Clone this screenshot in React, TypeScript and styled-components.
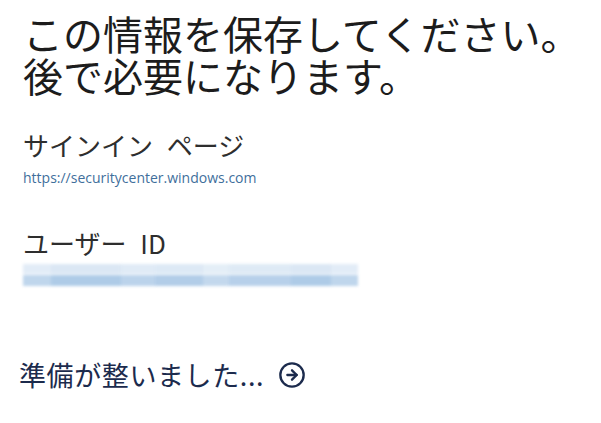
import React from 'react'
import styled, { createGlobalStyle } from 'styled-components'
import { CircleArrowRight } from 'lucide-react'

const idSegments = [
  { width: 28, tone: 0.75 },
  { width: 70, tone: 0.95 },
  { width: 34, tone: 0.8 },
  { width: 48, tone: 0.9 },
  { width: 26, tone: 0.7 },
  { width: 62, tone: 0.85 },
  { width: 40, tone: 0.95 },
  { width: 27, tone: 0.75 },
]

export default function App() {
  return (
    <>
      <GlobalStyle />
      <Page>
        <Title>
          この情報を保存してください。
          <br />
          後で必要になります。
        </Title>
        <Field $gap={32}>
          <Label>サインイン ページ</Label>
          <Url>https://securitycenter.windows.com</Url>
        </Field>
        <Field $gap={38}>
          <Label>ユーザー ID</Label>
          <Blurred>
            <BlurRow $faint>
              {idSegments.map((s, i) => (
                <Segment key={i} $tone={s.tone * 0.45} style={{ width: s.width }} />
              ))}
            </BlurRow>
            <BlurRow>
              {idSegments.map((s, i) => (
                <Segment key={i} $tone={s.tone} style={{ width: s.width }} />
              ))}
            </BlurRow>
          </Blurred>
        </Field>
        <ReadyButton>
          <span>準備が整いました...</span>
          <CircleArrowRight size={28} strokeWidth={2} />
        </ReadyButton>
      </Page>
    </>
  )
}

const GlobalStyle = createGlobalStyle`
  html, body {
    margin: 0;
    padding: 0;
    background: #ffffff;
  }
  body {
    font-family: 'Noto Sans CJK JP', 'Noto Sans', sans-serif;
  }
`

const Page = styled.div`
  width: 601px;
  height: 423px;
  box-sizing: border-box;
  padding: 12px 0 0 23px;
  display: flex;
  flex-direction: column;
  overflow: hidden;
`

const Title = styled.h1`
  margin: 0;
  font-size: 40px;
  font-weight: 400;
  line-height: 42px;
  color: #1c1c1c;
`

const Field = styled.div<{ $gap: number }>`
  display: flex;
  flex-direction: column;
  margin-top: ${p => p.$gap}px;
`

const Label = styled.div`
  font-size: 26px;
  line-height: 34px;
  word-spacing: 8px;
  color: #2e2e2e;
`

const Url = styled.div`
  margin-top: 6px;
  font-family: 'Open Sans', 'Noto Sans', sans-serif;
  font-size: 14px;
  line-height: 20px;
  color: #3f6f9c;
`

const Blurred = styled.div`
  margin-top: 4px;
  width: 335px;
  display: flex;
  flex-direction: column;
  gap: 1px;
  filter: blur(1.5px);
`

const BlurRow = styled.div<{ $faint?: boolean }>`
  display: flex;
  height: ${p => (p.$faint ? 10 : 11)}px;
`

const Segment = styled.div<{ $tone: number }>`
  height: 100%;
  background: rgba(170, 200, 230, ${p => p.$tone});
`

const ReadyButton = styled.div`
  margin-top: 72px;
  margin-left: -4px;
  display: flex;
  align-items: center;
  gap: 14px;
  font-size: 27px;
  line-height: 34px;
  letter-spacing: 0.6px;
  color: #1c2b4d;
  svg {
    color: #1c2b4d;
  }
`
